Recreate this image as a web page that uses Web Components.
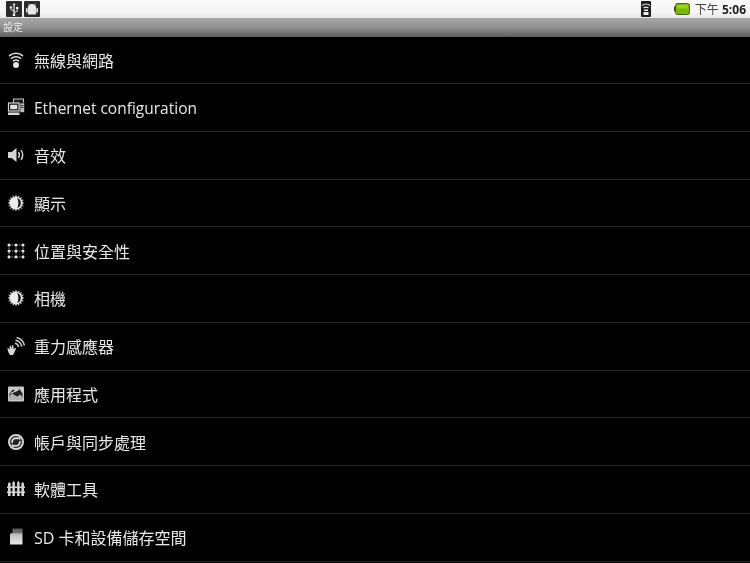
<!DOCTYPE html>
<html lang="zh-Hant"><head><meta charset="utf-8">
<style>
html,body{margin:0;padding:0;background:#000;height:100%;overflow:hidden}
body{width:750px;height:563px;display:flex;flex-direction:column;font-family:"Open Sans","Noto Sans CJK TC",sans-serif;filter:blur(.35px)}
</style></head><body>
<status-bar></status-bar>
<title-bar>設定</title-bar>
<setting-list>
<setting-row><svg slot="icon" viewBox="0 0 18 18"><g fill="none" stroke="#e0e0e0" stroke-width="1.5" stroke-linecap="round"><path d="M2.5 4.600C6 1.500 12 1.500 15.500 4.600"/><path d="M4.400 7.300C7 5.200 11 5.200 13.600 7.300"/><path d="M6.400 9.900C8 8.800 10 8.800 11.600 9.900"/></g><circle cx="9" cy="14" r="3" fill="#e8e8e8"/></svg>無線與網路</setting-row>
<setting-row><svg slot="icon" viewBox="0 0 18 18"><rect x="6.500" y="1" width="10" height="9" fill="#1c1c1c" stroke="#c8c8c8"/><rect x="13" y="5" width="4.500" height="9.500" fill="#bdbdbd" stroke="#000" stroke-width=".6"/><path d="M14 7.500h2.500M14 9.500h2.500" stroke="#333"/><rect x="1.500" y="5" width="10.500" height="8" fill="#000" stroke="#d8d8d8" stroke-width="1.200"/><rect x="3.200" y="6.700" width="7.100" height="4.600" fill="#e0e0e0"/><path d="M1 14.500h11.500v2.500H1z" fill="#d8d8d8"/></svg><span style="display:block;font-size:15.500px;padding-top:2px">Ethernet configuration</span></setting-row>
<setting-row><svg slot="icon" viewBox="0 0 18 18"><path d="M1 6h3.600L9.500 2v14l-4.900-4H1z" fill="#d4d4d4"/><g fill="none" stroke="#dcdcdc" stroke-width="1.400"><path d="M11.500 6.200c1.100 1.700 1.100 3.900 0 5.600"/><path d="M14 4.200c2 2.800 2 6.800 0 9.600"/></g></svg>音效</setting-row>
<setting-row><sun-icon slot="icon"></sun-icon>顯示</setting-row>
<setting-row><svg slot="icon" viewBox="0 0 18 18"><g stroke="#a8a8a8" stroke-width=".9" stroke-dasharray="1.500 1"><path d="M2 3h14M2 9h14M2 15h14M2 3v12M9 3v12M16 3v12"/></g><g fill="#e4e4e4"><circle cx="2" cy="3" r="1.500"/><circle cx="9" cy="3" r="1.500"/><circle cx="16" cy="3" r="1.500"/><circle cx="2" cy="9" r="1.500"/><circle cx="9" cy="9" r="1.500"/><circle cx="16" cy="9" r="1.500"/><circle cx="2" cy="15" r="1.500"/><circle cx="9" cy="15" r="1.500"/><circle cx="16" cy="15" r="1.500"/></g></svg>位置與安全性</setting-row>
<setting-row><sun-icon slot="icon"></sun-icon>相機</setting-row>
<setting-row><svg slot="icon" viewBox="0 0 18 18"><path d="M0.300 11.500l1.200-.300 1 1.500.2-3.700 1.200-.3.700 3.300.5-3.800 1.300.1.200 4 1.500-1.600 1 .7-2 4.600-1.200 2H3l-1.500-2.500z" fill="#d8d8d8"/><g fill="none" stroke="#cfcfcf" stroke-width="1.500"><path d="M8 6.300c1.900.4 3.300 1.800 3.700 3.700"/><path d="M8.500 3.300c3.400.6 5.600 2.900 6.300 6.200"/><path d="M9.500 .600c4 .8 7 3.700 7.900 7.900"/></g></svg>重力感應器</setting-row>
<setting-row><svg slot="icon" viewBox="0 0 18 18"><rect x="1" y="1.500" width="16" height="15" rx="1" fill="#c8c8c8"/><path d="M2.500 8.500L6 4.500l3 2 3-3 3.500 5v4.500h-13z" fill="#222"/><path d="M2.500 11L5 8.500l5 3 3.500-2 2 2.500v3h-13z" fill="#b0b0b0"/><path d="M3.500 8.500L12 4.500" stroke="#f0f0f0"/></svg>應用程式</setting-row>
<setting-row><svg slot="icon" viewBox="0 0 18 18"><circle cx="9" cy="9" r="7" fill="#222" stroke="#d4d4d4" stroke-width="2"/><g fill="none" stroke="#e0e0e0" stroke-width="1.600"><path d="M5.200 9.800A3.900 3.900 0 0 1 11.300 5.900"/><path d="M12.800 8.200A3.900 3.900 0 0 1 6.700 12.100"/></g><path d="M10.300 4l3.200.4-.5 3.100zM7.700 14l-3.200-.4.500-3.100z" fill="#e0e0e0"/></svg>帳戶與同步處理</setting-row>
<setting-row><svg slot="icon" viewBox="0 0 18 18"><g fill="#d4d4d4"><path d="M1 3.500l1.300-1.500L3.600 3.500V16H1zM5.400 2.500l1.200-1.500L7.900 2.500V16H5.400zM10.100 2.500l1.200-1.500L12.600 2.500V16H10.100zM14.400 3.500l1.300-1.500L17 3.500V16h-2.600z"/><path d="M0 6.500h18v1.600H0zM0 11.500h18v1.600H0z"/></g></svg>軟體工具</setting-row>
<setting-row><svg slot="icon" viewBox="0 0 18 18"><defs><linearGradient id="sd" x1="0" y1="0" x2="0" y2="1"><stop offset="0" stop-color="#555"/><stop offset=".28" stop-color="#777"/><stop offset=".34" stop-color="#bbb"/><stop offset="1" stop-color="#ebebeb"/></linearGradient></defs><path d="M5.500 .500H15.500V16.500H3V6L5.500 4.500z" fill="url(#sd)"/></svg>SD 卡和設備儲存空間</setting-row>
</setting-list>
<script>
const def=(n,html)=>{customElements.define(n,class extends HTMLElement{constructor(){super();this.attachShadow({mode:'open'}).innerHTML=html}})};
const fontCJK='"Open Sans","Noto Sans CJK TC",sans-serif';
def('status-bar',`<style>
:host{display:flex;align-items:center;height:18px;flex:none;background:linear-gradient(#fafafa,#f4f4f4 70%,#e8e8e8);padding:0 0 0 6px;box-sizing:border-box}
.badge{width:16px;height:16px;background:#2b2b2b;border-radius:1px;display:flex;align-items:center;justify-content:center;margin-right:2px}
.badge svg{width:14px;height:14px;display:block}
.spacer{flex:1}
.clock{font:12px ${fontCJK};color:#444;margin-right:4px;white-space:nowrap}
b{font-weight:700;color:#222}
.sig{width:10px;height:16px;margin-right:23px;background:#1d1d1d;border-radius:1px;display:flex}
.bat{width:16px;height:12px;margin-right:5px;display:block}
</style>
<div class="badge"><svg viewBox="0 0 14 14"><path d="M7 1l1.500 2H7.600v7.200l2.200-1.700V6.900H9V5h2.400v1.900h-.7v2L7.600 11.200v.6a1.300 1.300 0 1 1-1.200 0V9.600L3.400 7.600V6.300a1.100 1.100 0 1 1 1 0v.9l2 1.400V3H5.500z" fill="#f0f0f0"/></svg></div>
<div class="badge"><svg viewBox="0 0 14 14"><path d="M2.800 6.300a4.200 4.200 0 0 1 8.400 0v5a1.200 1.200 0 0 1-1.200 1.200H4a1.200 1.200 0 0 1-1.200-1.200z" fill="#e8e8e8"/><rect x="1" y="6" width="1.500" height="4.500" rx=".7" fill="#e8e8e8"/><rect x="11.500" y="6" width="1.500" height="4.500" rx=".7" fill="#e8e8e8"/><path d="M4.500 3l-1-1.500M9.500 3l1-1.500" stroke="#e8e8e8" stroke-width=".7"/></svg></div>
<div class="spacer"></div>
<div class="sig"><svg viewBox="0 0 10 16" width="10" height="16"><g fill="none" stroke="#eee" stroke-width="1.100"><path d="M1 4.500C3.500 2.700 6.500 2.700 9 4.500"/><path d="M2.500 7C4 6 6 6 7.500 7"/></g><rect x="3" y="8.500" width="4" height="1.500" fill="#eee"/><rect x="2.500" y="11" width="5" height="3" fill="#eee"/></svg></div>
<svg class="bat" viewBox="0 0 16 12"><rect x="0" y="3.500" width="2" height="5" fill="#444"/><rect x="1.500" y=".5" width="14" height="11" rx="2" fill="#7ab800" stroke="#4a5a3a"/><rect x="3" y="2" width="11" height="3.500" rx="1" fill="#9ad41e"/></svg>
<div class="clock">下午 <b>5:06</b></div>`);
def('title-bar',`<style>
:host{display:block;height:19px;flex:none;box-sizing:border-box;background:linear-gradient(#a6a6a6,#909090 50%,#5e5e5e);color:#ececec;font:10px/19px ${fontCJK};padding-left:3px}
</style><slot></slot>`);
def('setting-list',`<style>
:host{display:grid;grid-auto-rows:47.75px;flex:1;margin-top:-.75px;color:#e8e8e8}
</style><slot></slot>`);
def('setting-row',`<style>
:host{display:flex;align-items:center;box-sizing:border-box;border-bottom:1px solid #2a2a2a;padding-left:7px;font:16px ${fontCJK};color:#e8e8e8;white-space:nowrap}
.i{width:18px;height:18px;margin-right:9px;display:flex;flex:none}
.t{display:block}
::slotted(svg),::slotted(sun-icon){width:18px;height:18px;display:block}
</style><span class="i"><slot name="icon"></slot></span><span class="t"><slot></slot></span>`);
const rays=Array.from({length:16},(_,i)=>`<path d="M9 0.500L10.200 3H7.800z" transform="rotate(${i*22.5} 9 9)"/>`).join('');
def('sun-icon',`<style>:host{display:block}svg{display:block;width:100%;height:100%}</style><svg viewBox="0 0 18 18"><g fill="#c0c0c0">${rays}</g><circle cx="9" cy="9" r="6.300" fill="#ececec"/><path d="M10 4a5.200 5.200 0 0 1 0 10c1-1.400 1.400-3.200 1.400-5S11 5.400 10 4z" fill="#111"/></svg>`);
</script>
</body></html>
